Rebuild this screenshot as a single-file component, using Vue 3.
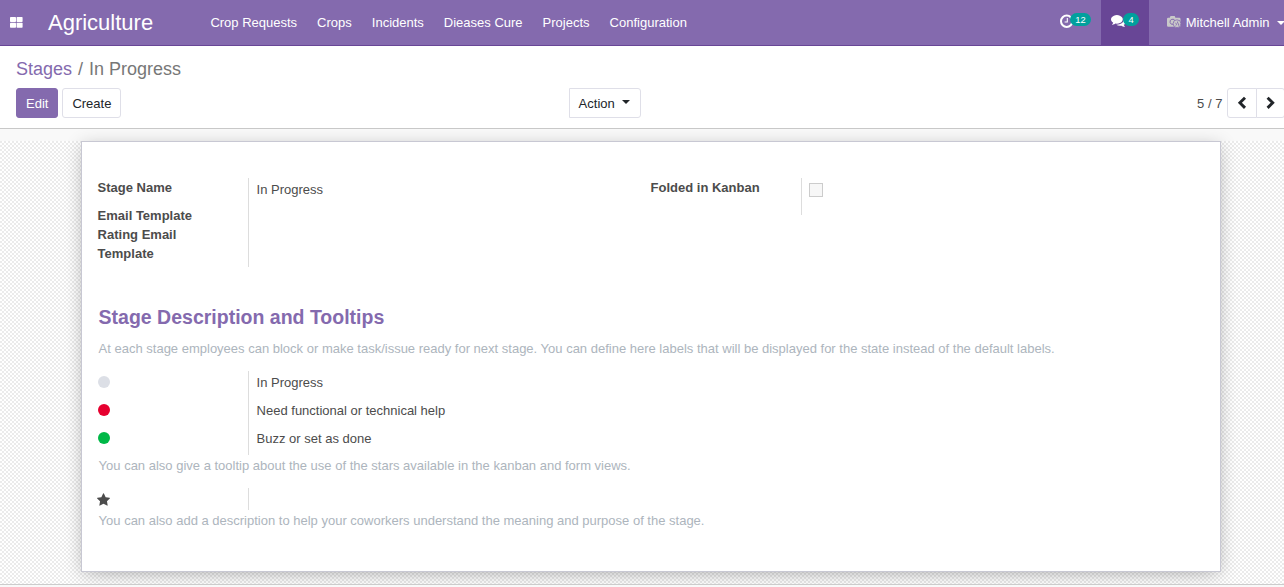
<script setup>
const menus = ['Crop Requests', 'Crops', 'Incidents', 'Dieases Cure', 'Projects', 'Configuration']
const states = [
  { kind: 'grey', text: 'In Progress' },
  { kind: 'red', text: 'Need functional or technical help' },
  { kind: 'green', text: 'Buzz or set as done' }
]
</script>

<template>
  <div class="app">
    <header class="nav">
      <svg class="grid" width="13" height="11" viewBox="0 0 13 11">
        <g fill="#fff">
          <rect width="6" height="5" rx=".7" /><rect x="6.6" width="6" height="5" rx=".7" />
          <rect y="5.8" width="6" height="5" rx=".7" /><rect x="6.6" y="5.8" width="6" height="5" rx=".7" />
        </g>
      </svg>
      <span class="brand">Agriculture</span>
      <nav class="menu"><a v-for="m in menus" :key="m">{{ m }}</a></nav>
      <div class="systray">
        <a class="tray clock">
          <svg width="14" height="14" viewBox="0 0 14 14" fill="none" stroke="#fff">
            <circle cx="6.700" cy="7.300" r="5.700" stroke-width="2" />
            <path d="M7.300 4V8H4.600" stroke-width="1.100" />
          </svg>
          <span class="badge">12</span>
        </a>
        <a class="tray chat">
          <svg width="15" height="13" viewBox="0 0 1792 1536" fill="#fff">
            <path d="M1408 512q0 139-94 257t-256.500 186.500-353.500 68.500q-86 0-176-16-124 88-278 128-36 9-86 16h-3q-11 0-20.500-8t-11.500-21q-1-3-1-6.500t.5-6.500 2-6l2.500-5 3.500-5.500 4-5 4.500-5 4-4.500q5-6 23-25t26-29.500 22.500-29 25-38.500 20.500-44q-124-72-195-177t-71-224q0-139 94-257t256.500-186.500 353.500-68.500 353.500 68.500 256.500 186.500 94 257zm384 256q0 120-71 224.500t-195 176.500q10 24 20.500 44t25 38.500 22.500 29 26 29.500 23 25q1 1 4 4.500t4.500 5 4 5 3.500 5.500l2.500 5 2 6 .5 6.500-1 6.500q-3 14-13 22t-22 7q-50-7-86-16-154-40-278-128-90 16-176 16-271 0-472-132 58 4 88 4 161 0 309-45t264-129q125-92 192-212t67-254q0-77-23-152 129 71 204 178t75 230z" />
          </svg>
          <span class="badge four">4</span>
        </a>
        <a class="user">
          <svg width="15" height="12" viewBox="0 0 15 12">
            <path d="M1.200 1.700H2.800L3.500 0h4.200L8.400 1.700h3.900Q13.500 1.700 13.500 3V9.500Q13.500 10.800 12.300 10.800H1.200Q0 10.800 0 9.500V3Q0 1.700 1.200 1.700z" fill="#c9c9c9" />
            <path d="M6.300 8.300A2.600 2.600 0 1 1 8.100 5" fill="none" stroke="#846aae" />
            <circle cx="10" cy="7.700" r="3.900" fill="#c9c9c9" stroke="#846aae" stroke-width=".8" />
            <path d="M8.300 6.700l1.300 1.400-.7 1.400M10.600 5.500v1.700l1 .6v1.800" fill="none" stroke="#846aae" stroke-width=".9" />
          </svg>
          <span>Mitchell Admin</span><i class="caret"></i>
        </a>
      </div>
    </header>

    <section class="panel">
      <div class="crumbs"><a>Stages</a><span class="sep">/</span><span>In Progress</span></div>
      <div class="bar">
        <div class="buttons"><button class="btn primary">Edit</button><button class="btn">Create</button></div>
        <button class="btn action">Action<i class="caret"></i></button>
        <div class="pager">
          <span>5 / 7</span>
          <button class="btn prev"><svg width="10" height="14" viewBox="0 0 10 14"><path d="M8 1.700L2.900 6.800l5.100 5.100" /></svg></button>
          <button class="btn next"><svg width="10" height="14" viewBox="0 0 10 14"><path d="M1.600 1.700l5.100 5.100-5.100 5.100" /></svg></button>
        </div>
      </div>
    </section>

    <main class="view">
      <div class="backdrop">
        <article class="sheet">
          <div class="columns">
            <div class="group">
              <div class="labels"><b class="first">Stage Name</b><b>Email Template</b><b>Rating Email<br>Template</b></div>
              <div class="values tall">In Progress</div>
            </div>
            <div class="group">
              <div class="labels"><b class="first">Folded in Kanban</b></div>
              <div class="values short"><span class="check"></span></div>
            </div>
          </div>
          <h2>Stage Description and Tooltips</h2>
          <p class="intro">At each stage employees can block or make task/issue ready for next stage. You can define here labels that will be displayed for the state instead of the default labels.</p>
          <div class="states">
            <div v-for="s in states" :key="s.kind" class="state">
              <div class="mark"><i class="dot" :class="s.kind"></i></div>
              <div class="text">{{ s.text }}</div>
            </div>
          </div>
          <p class="stars">You can also give a tooltip about the use of the stars available in the kanban and form views.</p>
          <div class="starrow">
            <div class="mark">
              <svg width="13" height="13" viewBox="0 0 1664 1587"><path fill="#4c4c4c" d="M1664 615q0 22-26 48l-363 354 86 500q1 7 1 20 0 21-10.500 35.500t-30.500 14.500q-19 0-40-12l-449-236-449 236q-22 12-40 12-21 0-31.500-14.500t-10.500-35.500q0-6 2-20l86-500-364-354q-25-27-25-48 0-37 56-46l502-73 225-455q19-41 49-41t49 41l225 455 502 73q56 9 56 46z" /></svg>
            </div>
            <div class="rule"></div>
          </div>
          <p>You can also add a description to help your coworkers understand the meaning and purpose of the stage.</p>
        </article>
      </div>
      <div class="chatter"></div>
    </main>
  </div>
</template>

<style>
body { margin: 0; overflow: hidden; }
</style>

<style scoped>
* { box-sizing: border-box; }
.app { width: 1284px; height: 587px; overflow: hidden; background: #fff; color: #4c4c4c; font: 13px/19px "Liberation Sans", Arial, sans-serif; display: flex; flex-direction: column; }
.nav { position: relative; height: 46px; flex: none; background: #846aae; border-bottom: 1px solid #684696; color: #fff; display: flex; align-items: center; padding-left: 10px; }
.grid { margin-top: -1px; flex: none; }
.brand { width: 162px; margin-left: 25px; font-size: 22px; line-height: 45px; flex: none; }
.menu { display: flex; gap: 20px; line-height: 45px; white-space: nowrap; padding-left: .4px; }
.systray { display: flex; height: 46px; align-self: flex-start; margin-left: auto; flex: none; }
.tray { display: flex; align-items: flex-start; }
.clock { width: 41px; }
.clock svg { margin-top: 14px; flex: none; }
.chat { width: 48px; background: #684696; padding-left: 10px; }
.chat svg { margin-top: 15px; flex: none; }
.badge { width: 21px; text-align: center; height: 13px; margin: 13px 0 0 -4px; border-radius: 7px; background: #00a09d; color: #fff; font: 9.4px/13px "Liberation Sans", Arial, sans-serif; }
.badge.four { width: 16px; margin-left: -3px; }
.user { width: 135px; display: flex; align-items: center; padding-left: 18px; height: 45px; white-space: nowrap; overflow: hidden; }
.user svg { flex: none; margin-right: 3.700px; margin-top: -1px; }
.caret { border: 4px solid transparent; border-top-color: currentColor; border-bottom: 0; flex: none; }
.user .caret { margin-left: 7px; }
.panel { height: 83px; flex: none; border-bottom: 1px solid #c8c8c8; padding: 10px 0 0 16px; }
.crumbs { font-size: 18px; line-height: 27px; color: #777; }
.crumbs a { color: #846aae; }
.sep { margin: 0 6px; }
.bar { display: flex; margin-top: 5px; }
.buttons { display: flex; gap: 4px; width: 553px; }
.btn { height: 30px; padding: 1px 9px 0; border: 1px solid #dfdfe8; border-radius: 3px; background: #fff; color: #212529; font: 13px/28px "Liberation Sans", Arial, sans-serif; }
.primary { background: #846aae; border-color: #846aae; color: #fff; }
.action { width: 72px; border-radius: 0 3px 3px 0; display: flex; padding-right: 0; padding-left: 8.600px; }
.action .caret { margin: 10px 0 0 7px; }
.pager { margin-left: auto; display: flex; line-height: 31px; }
.pager span { margin-right: 4.600px; }
.pager .btn { width: 30px; padding: 0; display: flex; align-items: center; justify-content: center; }
.pager .prev { border-radius: 3px 0 0 3px; }
.pager .next { width: 29px; margin: 0 -1px; border-radius: 0 3px 3px 0; }
.pager path { fill: none; stroke: #212529; stroke-width: 2.900; }
.view { flex: 1; background: #f9f9f9; padding-top: 12px; }
.backdrop { height: 443px; padding-left: 81px; background: repeating-conic-gradient(#fff 0 25%, #ebebeb 0 50%) 0 0 / 4px 4px; }
.sheet { width: 1140px; height: 431px; background: #fff; border: 1px solid #c8c8d3; box-shadow: 0 5px 20px -15px rgba(0, 0, 0, .4), 0 3px 16px rgba(0, 0, 0, .19); clip-path: inset(-12px -30px -12px -30px); padding: 36px 16px 0 15.600px; }
.columns { display: grid; grid-template-columns: 553px 1fr; height: 125px; align-items: start; }
.group { display: flex; }
.labels { width: 150.400px; display: flex; flex-direction: column; }
.labels .first { margin-bottom: 9px; }
.values { border-left: 1px solid #ddd; padding: 2px 0 0 7.600px; }
.tall { height: 89px; }
.short { height: 37px; padding: 5px 0 0 7px; }
.check { display: block; width: 14px; height: 14px; border: 1px solid #ccc; background: #f7f7f7; }
h2 { margin: 0; padding-left: 1px; font-size: 19.500px; line-height: 28px; color: #846aae; }
p { margin: 0; padding-left: 1px; color: #adb5bd; white-space: nowrap; }
.intro { margin-top: 8px; }
.states { margin-top: 13px; }
.state { height: 28px; display: flex; }
.mark { width: 150.400px; flex: none; padding-left: .4px; }
.dot { display: block; width: 12px; height: 12px; border-radius: 50%; margin-top: 5px; }
.grey { background: #dcdfe6; }
.red { background: #e6002f; }
.green { background: #00b847; }
.text { border-left: 1px solid #ddd; padding: 2px 0 0 7.600px; }
.stars { margin-top: 1px; }
.starrow { display: flex; height: 23px; margin-top: 13px; }
.starrow svg { display: block; margin: 5px 0 0 -.5px; }
.rule { height: 22px; border-left: 1px solid #ddd; }
.chatter { border-top: 1px solid #ccc; }
</style>
